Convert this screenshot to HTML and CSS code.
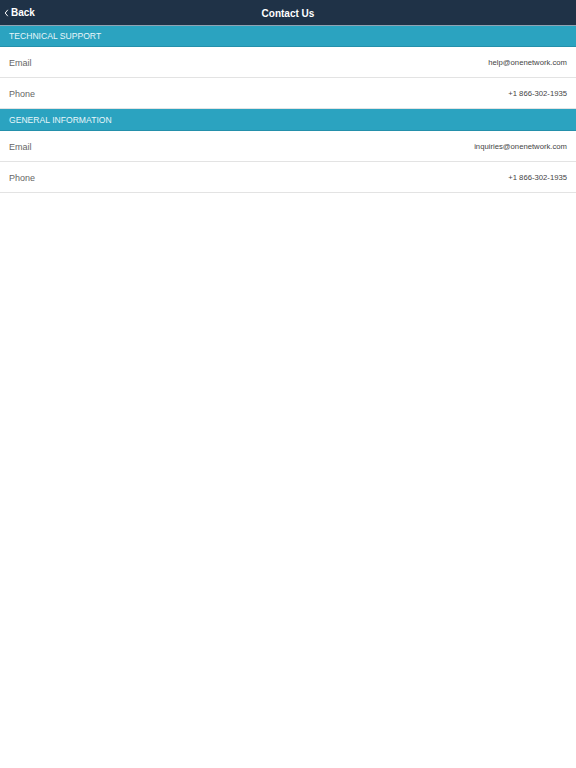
FILE: index.html
```html
<!DOCTYPE html>
<html lang="en">
<head>
  <meta charset="UTF-8" />
  <meta name="viewport" content="width=device-width, initial-scale=1.0"/>
  <title>Contact Us</title>
  <link rel="stylesheet" href="styles.css">
</head>
<body>

  <header class="topbar">
    <a class="back" href="#">
      <svg class="chev" width="5" height="8" viewBox="0 0 5 8"><path d="M3.8 0.8 L1.2 4 L3.8 7.2" fill="none" stroke="#ffffff" stroke-width="1"/></svg>
      Back
    </a>
    <div class="title">Contact Us</div>
  </header>

  <!-- Technical support -->
  <div class="group-head">TECHNICAL SUPPORT</div>
  <div class="row">
    <span class="label">Email</span>
    <span class="value">help@onenetwork.com</span>
  </div>
  <div class="row">
    <span class="label">Phone</span>
    <span class="value">+1 866-302-1935</span>
  </div>

  <!-- General information -->
  <div class="group-head">GENERAL INFORMATION</div>
  <div class="row">
    <span class="label">Email</span>
    <span class="value">inquiries@onenetwork.com</span>
  </div>
  <div class="row">
    <span class="label">Phone</span>
    <span class="value">+1 866-302-1935</span>
  </div>

</body>
</html>
```

FILE: styles.css
```css
body {
  font-family: "Liberation Sans", Arial, sans-serif;
  background-color: #ffffff;
  margin: 0;
  padding: 0;
}
.topbar {
  background-color: #1f3247;
  color: white;
  height: 25px;
  border-bottom: 1px solid #8fa3b3;
  display: flex;
  align-items: center;
  justify-content: center;
  position: relative;
}
.back {
  position: absolute;
  left: 4px;
  top: 0;
  height: 25px;
  display: flex;
  align-items: center;
  gap: 2px;
  color: white;
  text-decoration: none;
  font-size: 10px;
  font-weight: bold;
}
.title {
  font-size: 10px;
  font-weight: bold;
  padding-top: 1px;
}
.group-head {
  background-color: #2ba3c0;
  color: #e8f6fa;
  height: 20px;
  border-bottom: 1px solid #2490ab;
  padding-left: 9px;
  display: flex;
  align-items: center;
  font-size: 8.6px;
}
.group-head + .row {
  margin-top: 0;
}
.row {
  height: 30px;
  border-bottom: 1px solid #e3e3e3;
  display: flex;
  justify-content: space-between;
  align-items: center;
  padding: 0 9px;
}
.row + .group-head {
  height: 21px;
}
.label {
  font-size: 9px;
  color: #666666;
  padding-top: 1px;
}
.value {
  font-size: 7.7px;
  color: #444444;
}
```
